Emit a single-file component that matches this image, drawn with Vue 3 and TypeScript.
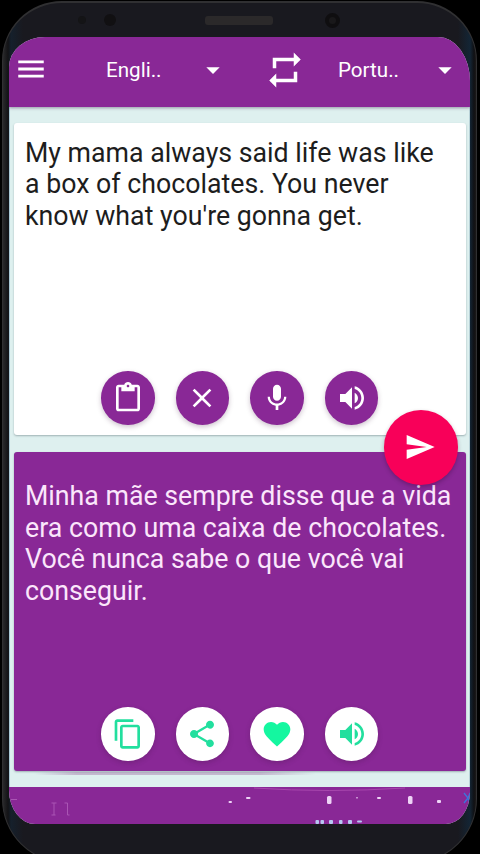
<script setup lang="ts">
interface Action {
  name: string
  path: string
}

const speaker =
  'M3 9v6h4l5 5V4L7 9H3zm13.5 3c0-1.77-1.02-3.29-2.5-4.03v8.05c1.48-.73 2.5-2.25 2.5-4.02zM14 3.23v2.06c2.89.86 5 3.54 5 6.71s-2.11 5.85-5 6.71v2.06c4.01-.91 7-4.49 7-8.77s-2.99-7.86-7-8.77z'

const sourceActions: Action[] = [
  {
    name: 'paste',
    path: 'M19 2h-4.18C14.4.84 13.3 0 12 0c-1.3 0-2.4.84-2.82 2H5c-1.1 0-2 .9-2 2v16c0 1.1.9 2 2 2h14c1.1 0 2-.9 2-2V4c0-1.1-.9-2-2-2zm-7 0c.55 0 1 .45 1 1s-.45 1-1 1-1-.45-1-1 .45-1 1-1zm7 18H5V4h2v3h10V4h2v16z',
  },
  {
    name: 'clear',
    path: 'M19 6.41L17.59 5 12 10.59 6.41 5 5 6.41 10.59 12 5 17.59 6.41 19 12 13.41 17.59 19 19 17.59 13.41 12z',
  },
  {
    name: 'mic',
    path: 'M12 14c1.66 0 2.99-1.34 2.99-3L15 5c0-1.66-1.34-3-3-3S9 3.34 9 5v6c0 1.66 1.34 3 3 3zm5.3-3c0 3-2.54 5.1-5.3 5.1S6.7 14 6.7 11H5c0 3.41 2.72 6.23 6 6.72V21h2v-3.28c3.28-.48 6-3.3 6-6.72h-1.7z',
  },
  { name: 'speak', path: speaker },
]

const resultActions: Action[] = [
  {
    name: 'copy',
    path: 'M16 1H4c-1.1 0-2 .9-2 2v14h2V3h12V1zm3 4H8c-1.1 0-2 .9-2 2v14c0 1.1.9 2 2 2h11c1.1 0 2-.9 2-2V7c0-1.1-.9-2-2-2zm0 16H8V7h11v14z',
  },
  {
    name: 'share',
    path: 'M18 16.08c-.76 0-1.44.3-1.96.77L8.91 12.7c.05-.23.09-.46.09-.7s-.04-.47-.09-.7l7.05-4.11c.54.5 1.25.81 2.04.81 1.66 0 3-1.34 3-3s-1.34-3-3-3-3 1.34-3 3c0 .24.04.47.09.7L8.04 9.81C7.5 9.31 6.79 9 6 9c-1.66 0-3 1.34-3 3s1.34 3 3 3c.79 0 1.5-.31 2.04-.81l7.12 4.16c-.05.21-.08.43-.08.65 0 1.61 1.31 2.92 2.92 2.92s2.92-1.31 2.92-2.92-1.31-2.92-2.92-2.92z',
  },
  {
    name: 'favorite',
    path: 'M12 21.35l-1.45-1.32C5.4 15.36 2 12.28 2 8.5 2 5.42 4.42 3 7.5 3c1.74 0 3.41.81 4.5 2.09C13.09 3.81 14.76 3 16.5 3 19.58 3 22 5.42 22 8.5c0 3.78-3.4 6.86-8.55 11.54L12 21.35z',
  },
  { name: 'speak', path: speaker },
]

const sourceLines: string[] = [
  'My mama always said life was like',
  'a box of chocolates. You never',
  "know what you're gonna get.",
]
const resultLines: string[] = [
  'Minha mãe sempre disse que a vida',
  'era como uma caixa de chocolates.',
  'Você nunca sabe o que você vai',
  'conseguir.',
]
</script>

<template>
  <div class="stage">
    <div class="phone">
      <div class="bezel">
        <i class="sensor small"></i>
        <i class="sensor"></i>
        <i class="earpiece"></i>
        <i class="sensor camera"></i>
      </div>

      <div class="screen">
        <header class="bar">
          <svg class="menu" viewBox="0 0 24 24"><path d="M3 18h18v-2H3v2zm0-5h18v-2H3v2zm0-7v2h18V6H3z" /></svg>
          <span class="lang from">Engli..</span>
          <svg class="caret" viewBox="0 0 24 24"><path d="M7 10l5 5 5-5z" /></svg>
          <svg class="swap" viewBox="0 0 24 24"><path d="M7 7h10v3l4-4-4-4v3H5v6h2V7zm10 10H7v-3l-4 4 4 4v-3h12v-6h-2v4z" /></svg>
          <span class="lang to">Portu..</span>
          <svg class="caret" viewBox="0 0 24 24"><path d="M7 10l5 5 5-5z" /></svg>
        </header>

        <main class="content">
          <section class="card source">
            <p class="text"><span v-for="line in sourceLines" :key="line" class="line">{{ line }}</span></p>
            <div class="actions">
              <button v-for="a in sourceActions" :key="a.name" class="round">
                <svg viewBox="0 0 24 24"><path :d="a.path" /></svg>
              </button>
            </div>
            <button class="send">
              <svg viewBox="0 0 24 24"><path d="M2.01 21L23 12 2.01 3 2 10l15 2-15 2z" /></svg>
            </button>
          </section>

          <section class="card result">
            <p class="text"><span v-for="line in resultLines" :key="line" class="line">{{ line }}</span></p>
            <div class="actions">
              <button v-for="a in resultActions" :key="a.name" class="round" :class="a.name">
                <svg viewBox="0 0 24 24"><path :d="a.path" /></svg>
              </button>
            </div>
          </section>
          <div class="edge"></div>
        </main>

        <footer class="strip">
          <svg viewBox="0 0 461 38">
            <path d="M245 1q75 5 151 0" fill="none" stroke="#a848ae" stroke-width="1" />
            <path d="M42.500 16h5M45 16v12M42.500 28h4M55.500 16h3v12h2M2 12.500h6" fill="none" stroke="#aa55b4" stroke-width="1" />
            <g fill="#eed4f6">
              <rect x="318" y="9" width="4.500" height="8" rx="1.500" />
              <rect x="399" y="9" width="4.500" height="8" rx="1.500" />
              <rect x="219.500" y="14" width="3.500" height="2" rx="1" />
              <rect x="237" y="10" width="4.500" height="2" rx="1" />
              <rect x="368" y="10" width="4" height="2" rx="1" />
              <rect x="428" y="13" width="4" height="3" rx="1" />
              <rect x="347" y="10" width="2" height="1.500" opacity=".6" />
            </g>
            <g fill="#b7c7f2">
              <rect x="306.500" y="33" width="3.500" height="4" rx="1" />
              <rect x="311.500" y="33" width="3.500" height="4" rx="1" />
              <rect x="320" y="33" width="4" height="4" rx="1" />
              <rect x="330" y="33" width="3.500" height="4" rx="1" />
              <rect x="339" y="33" width="4" height="4" rx="1" />
              <rect x="348" y="33.500" width="5" height="2" rx="1" />
            </g>
            <path d="M455 6l4 5-4 5M461 6l-2 5 2 5" fill="none" stroke="#3a76dc" stroke-width="1.300" />
          </svg>
        </footer>
      </div>
    </div>
  </div>
</template>

<style>
body {
  background: #000;
}
</style>

<style scoped>
* {
  box-sizing: border-box;
}
.stage {
  width: 480px;
  height: 854px;
  padding: 1px 2px 0 2px;
  overflow: hidden;
  background: #000;
  font-family: Roboto, sans-serif;
}
.phone {
  width: 475px;
  height: 862px;
  padding: 0 7px 0 8px;
  border: 1px solid #303032;
  border-top-width: 2px;
  border-radius: 60px 60px 64px 64px;
  background: linear-gradient(90deg, #29292b 0, #131316 5px, #15202c 8px, #19191f 20px, #19191f 455px, #132535 467px, #101013 471px, #27231f 475px);
}
.bezel {
  display: flex;
  align-items: center;
  height: 34px;
  padding-left: 67px;
}
.sensor {
  width: 12px;
  height: 12px;
  border-radius: 50%;
  background: #111012;
}
.sensor.small {
  width: 8px;
  height: 8px;
  margin-right: 18px;
  background: #141416;
}
.earpiece {
  width: 68px;
  height: 9px;
  margin: 0 52px 0 89px;
  border-radius: 3px;
  background: #2b292a;
}
.sensor.camera {
  width: 15px;
  height: 15px;
  border: 4px solid #0f0e10;
  background: #19181a;
}
.screen {
  display: flex;
  flex-direction: column;
  width: 461px;
  height: 787px;
  margin-left: -2px;
  overflow: hidden;
  border-radius: 36px 32px 24px 26px / 30px 44px 32px 34px;
  background: #def0ef;
}
.bar {
  display: flex;
  flex: none;
  align-items: center;
  height: 70px;
  padding: 0 0 5px 5px;
  background: #892896;
  color: #fff;
  box-shadow: 0 1px 3px rgba(60, 40, 70, 0.45);
  z-index: 1;
}
svg {
  display: block;
  fill: currentColor;
}
.menu {
  width: 34px;
  height: 34px;
  margin-top: -1px;
}
.caret {
  width: 32px;
  height: 32px;
}
.swap {
  width: 42px;
  height: 42px;
  margin: 0 32px 0 35px;
}
.lang {
  padding-top: 1px;
  font-size: 20.6px;
  line-height: 26px;
  white-space: nowrap;
}
.lang.from {
  width: 91px;
  margin-left: 58px;
}
.lang.to {
  width: 91px;
}
.content {
  display: flex;
  flex: none;
  flex-direction: column;
  gap: 17px;
  height: 680px;
  padding: 16px 3px 0 4px;
  border-left: 1px solid #a9c7d4;
  border-right: 1px solid #b9d2d8;
}
.card {
  position: relative;
  display: flex;
  flex: none;
  flex-direction: column;
  justify-content: space-between;
  border-radius: 3px;
  box-shadow: 0 1px 2px rgba(40, 60, 70, 0.35);
}
.source {
  height: 312px;
  padding: 14.5px 0 10px 11px;
  background: #fff;
  color: #1d1d1d;
  z-index: 1;
}
.result {
  height: 319px;
  padding: 29px 0 10px 11px;
  background: #892896;
  color: #fbe6fb;
}
.edge {
  height: 3px;
  margin: -16px 150px 0 20px;
  background: linear-gradient(90deg, transparent, #c4b9cf 15%, #c4b9cf 80%, transparent);
}
.text {
  margin: 0;
  font-size: 26.74px;
  line-height: 31.6px;
}
.line {
  display: block;
  white-space: nowrap;
}
.actions {
  display: flex;
  gap: 21px;
  padding-left: 76px;
}
.round,
.send {
  display: flex;
  align-items: center;
  justify-content: center;
  padding: 0;
  border: 0;
  border-radius: 50%;
}
.round {
  width: 53.600px;
  height: 53.600px;
  background: #892896;
  color: #fff;
  box-shadow: 0 2px 5px rgba(60, 20, 60, 0.25);
}
.result .round {
  background: #fff;
  color: #22df9e;
}
.result .round.favorite {
  color: #14f7a0;
}
.round svg,
.send svg {
  width: 32px;
  height: 32px;
}
.send {
  position: absolute;
  right: 8px;
  bottom: -49.500px;
  width: 74.500px;
  height: 74.500px;
  background: #f80059;
  color: #fff;
  box-shadow: 0 2px 4px rgba(40, 0, 40, 0.3);
}
.send svg {
  margin-left: -1px;
}
.strip {
  flex: 1;
  background: #892896;
}
</style>
